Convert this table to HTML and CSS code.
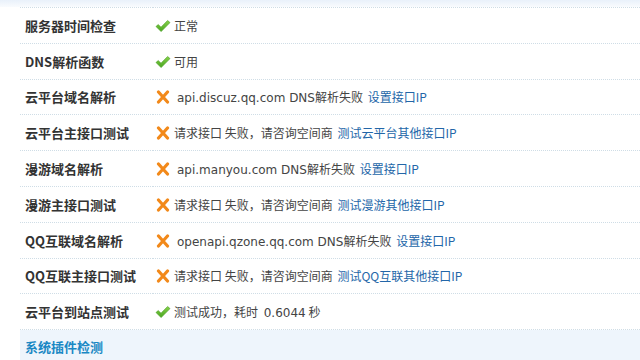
FILE: index.html
```html
<!doctype html>
<html lang="zh-CN">
<head>
<meta charset="UTF-8">
<title>云平台诊断</title>
<link rel="stylesheet" href="styles.css">
</head>
<body>
<div class="top-fade"></div>
<div class="wrap">
	<table class="check-tb">
		<tr>
			<th>服务器时间检查</th>
			<td><i class="ok"></i>正常</td>
		</tr>
		<tr>
			<th>DNS解析函数</th>
			<td><i class="ok"></i>可用</td>
		</tr>
		<tr>
			<th>云平台域名解析</th>
			<td><i class="err"></i><span class="lt">api.discuz.qq.com DNS</span>解析失败 <a href="#">设置接口IP</a></td>
		</tr>
		<tr>
			<th>云平台主接口测试</th>
			<td><i class="err"></i>请求接口 失败，请咨询空间商 <a href="#">测试云平台其他接口IP</a></td>
		</tr>
		<tr>
			<th>漫游域名解析</th>
			<td><i class="err"></i><span class="lt">api.manyou.com DNS</span>解析失败 <a href="#">设置接口IP</a></td>
		</tr>
		<tr>
			<th>漫游主接口测试</th>
			<td><i class="err"></i>请求接口 失败，请咨询空间商 <a href="#">测试漫游其他接口IP</a></td>
		</tr>
		<tr>
			<th>QQ互联域名解析</th>
			<td><i class="err"></i><span class="lt">openapi.qzone.qq.com DNS</span>解析失败 <a href="#">设置接口IP</a></td>
		</tr>
		<tr>
			<th>QQ互联主接口测试</th>
			<td><i class="err"></i>请求接口 失败，请咨询空间商 <a href="#">测试QQ互联其他接口IP</a></td>
		</tr>
		<tr>
			<th>云平台到站点测试</th>
			<td><i class="ok"></i>测试成功，耗时 <span class="lt">0.6044</span> 秒</td>
		</tr>
	</table>
	<div class="sec-title">系统插件检测</div>
</div>
</body>
</html>
```
FILE: styles.css
```css
*{ margin:0; padding:0;}
body{
	background:#fff;
	font-family:"Noto Sans CJK SC","DejaVu Sans",sans-serif;
	font-size:12px;
	color:#444;
}
a{text-decoration:none;color:#2366a8;}
.top-fade{
	height:7px;
	background:linear-gradient(#e9f1fa,#f9fbfe);
}
.wrap{
	padding-left:20px;
}
.check-tb{
	width:100%;
	border-collapse:collapse;
	border-top:1px dotted #cfdde6;
}
.check-tb th,
.check-tb td{
	height:34.8px;
	border-bottom:1px dotted #cfdde6;
	vertical-align:middle;
	text-align:left;
	white-space:nowrap;
}
.check-tb th{
	width:128px;
	padding-left:5px;
	font-size:13px;
	font-weight:bold;
	color:#333;
}
.check-tb td{
	padding-left:2px;
}
.check-tb a{
	margin-left:2px;
}
.lt{
	font-family:"DejaVu Sans","Noto Sans CJK SC",sans-serif;
	font-size:12px;
	margin-left:3px;
}
.check-tb i{
	display:inline-block;
	width:16px;
	height:14px;
	margin-right:3px;
	vertical-align:-2px;
	background-repeat:no-repeat;
	background-position:center;
}
.check-tb i.ok{
	background-image:url("data:image/svg+xml,%3Csvg xmlns='http://www.w3.org/2000/svg' width='16' height='14' viewBox='0 0 16 14'%3E%3Cdefs%3E%3ClinearGradient id='g' x1='0' y1='0' x2='0' y2='1'%3E%3Cstop offset='0' stop-color='%2388d24a'/%3E%3Cstop offset='1' stop-color='%2348a41e'/%3E%3C/linearGradient%3E%3C/defs%3E%3Cpath d='M1 7.5 L3.2 5.6 L6 8.2 L12.6 1.5 L15 3.6 L6.1 12.6 Z' fill='url(%23g)' stroke='%23439a1c' stroke-width='0.6' stroke-linejoin='round'/%3E%3C/svg%3E");
}
.check-tb i.err{
	background-image:url("data:image/svg+xml,%3Csvg xmlns='http://www.w3.org/2000/svg' width='16' height='14' viewBox='0 0 16 14'%3E%3Cpath d='M3.5 2 L12.5 12 M12.5 2 L3.5 12' stroke='%23f2891a' stroke-width='3.2' stroke-linecap='round'/%3E%3C/svg%3E");
}
.sec-title{
	height:34px;
	line-height:34px;
	padding-left:5px;
	background:#eef5fc;
	color:#1a88c4;
	font-size:13px;
	font-weight:bold;
}
```
